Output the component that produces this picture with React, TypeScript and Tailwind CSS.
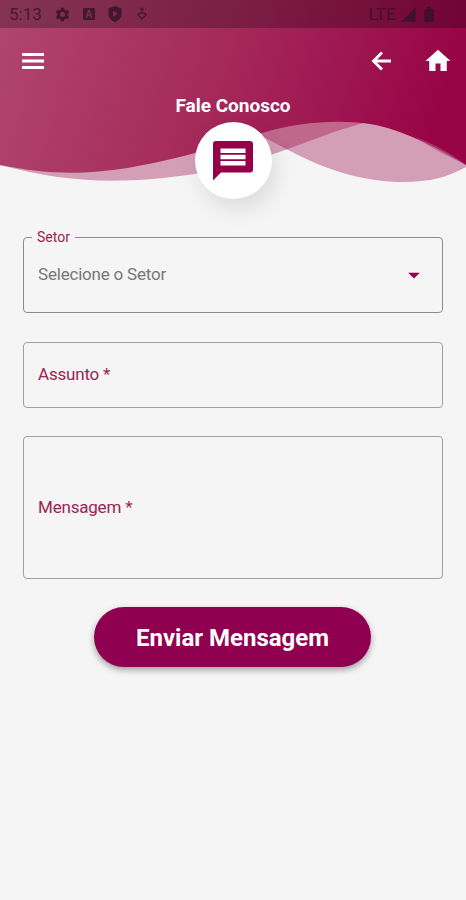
import React from "react";
import {
  MdArrowDropDown,
  MdHome,
  MdSettings,
  MdSignalCellular4Bar,
} from "react-icons/md";

const StatusBar: React.FC = () => (
  <div className="flex h-7 items-center bg-black/25 pl-[9px] pr-[32px] text-[#33112a]/80">
    <span className="w-[45px] text-[17px] leading-7">5:13</span>
    <MdSettings className="h-[17px] w-[17px]" />
    <svg viewBox="0 0 12 12" className="ml-[12px] h-3 w-3">
      <path
        fill="currentColor"
        fillRule="evenodd"
        d="M1 0h10a1 1 0 0 1 1 1v10a1 1 0 0 1-1 1H1a1 1 0 0 1-1-1V1a1 1 0 0 1 1-1zM5 2 2.500 10H4l.7-2.200h2.600L8 10h1.500L7 2zM6 3.800l.9 2.800H5.100z"
      />
    </svg>
    <svg viewBox="0 0 14 16" className="ml-[13px] h-4 w-3.5">
      <path
        fill="currentColor"
        fillRule="evenodd"
        d="M7 0l6.500 2.500v5.200c0 3.800-2.700 7-6.500 8.300C3.200 14.700.5 11.500.5 7.700V2.500zM5 4.700v6l5-3z"
      />
    </svg>
    <svg
      viewBox="0 0 12 14"
      className="ml-[14px] h-3.5 w-3"
      fill="none"
      stroke="currentColor"
      strokeWidth="1.2"
    >
      <path d="M6 1v4M4.300 2.700l1.700-1.700 1.700 1.700M2 8a4 2.200 0 0 1 8 0L6 12z" />
    </svg>
    <span className="ml-auto text-[17px] leading-7 tracking-[0.3px]">LTE</span>
    <MdSignalCellular4Bar className="ml-[4px] h-[17px] w-[17px]" />
    <svg viewBox="0 0 10 16" className="ml-[7px] h-[15px] w-[10px]">
      <path
        fill="currentColor"
        d="M3 0h4v2h2a1 1 0 0 1 1 1v12a1 1 0 0 1-1 1H1a1 1 0 0 1-1-1V3a1 1 0 0 1 1-1h2z"
      />
    </svg>
  </div>
);

const Waves: React.FC = () => (
  <svg viewBox="0 0 466 200" className="absolute left-0 top-0 h-[200px] w-full">
    <defs>
      <linearGradient id="header" x1="0" y1="0" x2="1" y2="0.12">
        <stop offset="0" stopColor="#b0466f" />
        <stop offset="0.5" stopColor="#a52a5c" />
        <stop offset="1" stopColor="#980547" />
      </linearGradient>
    </defs>
    <path
      fill="#980042"
      fillOpacity="0.35"
      d="M0 165C70 184 125 184 195 174C266 163 308 138 362 123.500V0H0z"
    />
    <path
      fill="#980042"
      fillOpacity="0.35"
      d="M200 120C235 121 264 137 290 151C330 172 367 182 403 182C430 182 448 177 466 167V0H200z"
    />
    <path
      fill="url(#header)"
      d="M0 165C65 178 112 175 195 153C222 146 238 140 262 133C302 121 342 119 376 125C410 133 437 148 466 165V0H0z"
    />
    <path
      fill="#b65580"
      fillOpacity="0.6"
      d="M415 137C435 144 453 155 466 165C449 157 431 148 415 137z"
    />
  </svg>
);

const MenuIcon: React.FC = () => (
  <svg viewBox="0 0 24 18" className="h-[18px] w-6" fill="currentColor">
    <path d="M1 1h22v3H1zM1 7.500h22v3H1zM1 14h22v3H1z" />
  </svg>
);

const BackIcon: React.FC = () => (
  <svg
    viewBox="0 0 20 20"
    className="ml-auto h-5 w-5"
    fill="none"
    stroke="currentColor"
    strokeWidth="2.8"
  >
    <path d="M20 10H3M11 1.500L2.500 10L11 18.500" />
  </svg>
);

const MessageIcon: React.FC = () => (
  <svg viewBox="0 0 40 40" className="h-10 w-10">
    <path
      fill="#960048"
      d="M3 0H37A3 3 0 0 1 40 3V28.500A3 3 0 0 1 37 31.500H8L0 39.500V3A3 3 0 0 1 3 0z"
    />
    <path
      fill="#fff"
      d="M7.500 7.500H32.500V12H7.500zM7.500 13.700H32.500V18.200H7.500zM7.500 20H32.500V24.500H7.500z"
    />
  </svg>
);

const Header: React.FC = () => (
  <header className="relative h-[237px]">
    <Waves />
    <div className="relative">
      <StatusBar />
      <div className="flex h-[66px] items-center pl-[21px] pr-[13px] text-white">
        <MenuIcon />
        <BackIcon />
        <MdHome className="ml-[32px] h-[30px] w-[30px]" />
      </div>
      <h1 className="text-center text-[19px] font-bold leading-[23px] text-white">
        Fale Conosco
      </h1>
      <div className="mx-auto mt-[5px] flex h-[77px] w-[77px] items-center justify-center rounded-full bg-white shadow-[5px_10px_22px_rgba(0,0,0,0.1)]">
        <MessageIcon />
      </div>
    </div>
  </header>
);

export default function App() {
  return (
    <div className="h-[900px] w-full overflow-hidden bg-[#f5f5f5] font-['Roboto',sans-serif]">
      <Header />
      <main className="flex flex-col px-[23px] text-[17px] tracking-[-0.2px] text-[#9c2453]">
        <div className="relative flex h-[76px] items-center rounded-[4px] border border-[#8c8c8c] px-[14px]">
          <span className="absolute -top-[11px] left-[8px] bg-[#f5f5f5] px-[5px] text-[14px] leading-5 tracking-normal">
            Setor
          </span>
          <span className="text-[#777]">Selecione o Setor</span>
          <MdArrowDropDown className="ml-auto h-[28px] w-[28px] text-[#960048]" />
        </div>
        <div className="mt-[29px] flex h-[66px] items-center rounded-[4px] border border-[#a0a0a0] pl-[14px]">
          Assunto *
        </div>
        <div className="mt-[28px] flex h-[143px] items-center rounded-[4px] border border-[#a0a0a0] pl-[14px]">
          Mensagem *
        </div>
        <button className="ml-[71px] mt-[28px] h-[60px] w-[277px] rounded-full bg-[#900050] pt-[2px] text-2xl font-bold tracking-normal text-white shadow-[0_3px_6px_rgba(0,0,0,0.35)]">
          Enviar Mensagem
        </button>
      </main>
    </div>
  );
}
